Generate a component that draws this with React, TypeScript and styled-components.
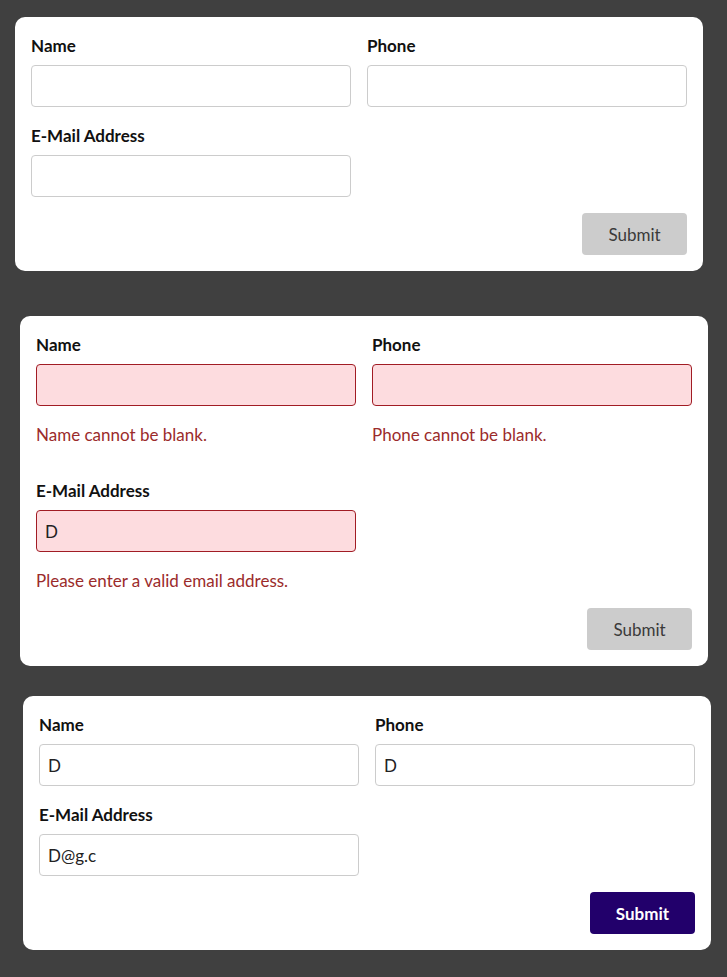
import React from "react";
import styled, { createGlobalStyle } from "styled-components";

const Global = createGlobalStyle`
  html, body { margin: 0; padding: 0; background: #404040; }
  body { font-family: "Lato", "Liberation Sans", sans-serif; color: #111; }
  * { box-sizing: border-box; }
`;

const Page = styled.div`
  display: flex;
  flex-direction: column;
  padding-bottom: 28px;
`;

const Card = styled.form<{ $left: number; $top: number }>`
  width: 688px;
  margin-left: ${(p) => p.$left}px;
  margin-top: ${(p) => p.$top}px;
  background: #ffffff;
  border-radius: 10px;
  padding: 16px;
  display: flex;
  flex-direction: column;
  gap: 16px;
`;

const Grid = styled.div<{ $rowGap: number }>`
  display: grid;
  grid-template-columns: 320px 320px;
  column-gap: 16px;
  row-gap: ${(p) => p.$rowGap}px;
`;

const Field = styled.div`
  display: flex;
  flex-direction: column;
`;

const Label = styled.label`
  font-size: 17px;
  font-weight: 700;
  line-height: 26px;
  color: #111;
  margin-bottom: 6px;
`;

const Input = styled.input<{ $invalid?: boolean }>`
  height: 42px;
  width: 100%;
  padding: 0 8px;
  font-family: inherit;
  font-size: 17px;
  color: #222;
  background: ${(p) => (p.$invalid ? "#fddcdf" : "#ffffff")};
  border: 1px solid ${(p) => (p.$invalid ? "#a11c24" : "#cccccc")};
  border-radius: 4px;
  outline: none;
`;

const ErrorText = styled.div`
  margin-top: 17px;
  font-size: 17px;
  line-height: 23px;
  color: #9b2b2b;
`;

const Actions = styled.div`
  display: flex;
  justify-content: flex-end;
`;

const SubmitButton = styled.button<{ $enabled?: boolean }>`
  width: 105px;
  height: 42px;
  border: none;
  border-radius: 4px;
  font-family: inherit;
  font-size: 17px;
  font-weight: ${(p) => (p.$enabled ? 700 : 400)};
  background: ${(p) => (p.$enabled ? "#22006b" : "#cccccc")};
  color: ${(p) => (p.$enabled ? "#ffffff" : "#3a3a3a")};
`;

type Vals = { name: string; phone: string; email: string };
type Errs = { name?: string; phone?: string; email?: string };

function ContactForm({
  left,
  top,
  values,
  errors = {},
  enabled,
}: {
  left: number;
  top: number;
  values: Vals;
  errors?: Errs;
  enabled?: boolean;
}) {
  const hasErrors = Object.keys(errors).length > 0;
  return (
    <Card $left={left} $top={top} onSubmit={(e) => e.preventDefault()}>
      <Grid $rowGap={hasErrors ? 32 : 16}>
        <Field>
          <Label>Name</Label>
          <Input $invalid={!!errors.name} defaultValue={values.name} />
          {errors.name && <ErrorText>{errors.name}</ErrorText>}
        </Field>
        <Field>
          <Label>Phone</Label>
          <Input $invalid={!!errors.phone} defaultValue={values.phone} />
          {errors.phone && <ErrorText>{errors.phone}</ErrorText>}
        </Field>
        <Field>
          <Label>E-Mail Address</Label>
          <Input $invalid={!!errors.email} defaultValue={values.email} />
          {errors.email && <ErrorText>{errors.email}</ErrorText>}
        </Field>
      </Grid>
      <Actions>
        <SubmitButton type="submit" $enabled={enabled}>
          Submit
        </SubmitButton>
      </Actions>
    </Card>
  );
}

export default function App() {
  return (
    <Page>
      <Global />
      <ContactForm left={15} top={17} values={{ name: "", phone: "", email: "" }} />
      <ContactForm
        left={20}
        top={45}
        values={{ name: "", phone: "", email: "D" }}
        errors={{
          name: "Name cannot be blank.",
          phone: "Phone cannot be blank.",
          email: "Please enter a valid email address.",
        }}
      />
      <ContactForm
        left={23}
        top={30}
        values={{ name: "D", phone: "D", email: "D@g.c" }}
        enabled
      />
    </Page>
  );
}
